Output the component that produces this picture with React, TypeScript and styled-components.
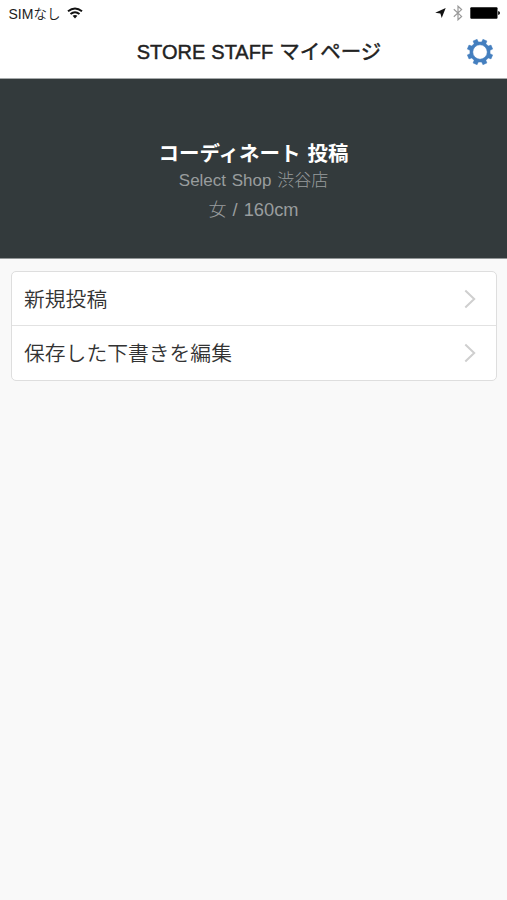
import React from 'react';
import styled, { createGlobalStyle } from 'styled-components';

const GlobalStyle = createGlobalStyle`
  * { box-sizing: border-box; }
  body {
    margin: 0;
    background: #f9f9f9;
    font-family: "Liberation Sans", "Noto Sans CJK JP", sans-serif;
    color: #333;
  }
`;

const Screen = styled.div`
  min-height: 900px;
  display: flex;
  flex-direction: column;
  background: #f9f9f9;
`;

const StatusBar = styled.div`
  height: 26px;
  padding: 0 6px 0 8.5px;
  display: flex;
  align-items: center;
  justify-content: space-between;
  background: #fff;
`;

const StatusGroup = styled.div<{ $gap: number }>`
  display: flex;
  align-items: center;
  gap: ${(p) => p.$gap}px;
  color: #1c1c1c;
  font-size: 14px;
  line-height: 20px;
  white-space: nowrap;
`;

const Carrier = styled.span`
  padding-top: 1px;
`;

const Kana = styled.span<{ $size: number; $weight?: number }>`
  font-family: "Noto Sans CJK JP", sans-serif;
  font-size: ${(p) => p.$size}px;
  font-weight: ${(p) => p.$weight ?? 400};
`;

const NavBar = styled.header`
  height: 53px;
  display: grid;
  grid-template-columns: 44px 1fr 44px;
  align-items: center;
  padding: 0 5px 1px;
  background: #fff;
  border-bottom: 1px solid #a5a9aa;
`;

const Title = styled.h1`
  grid-column: 2;
  margin: 0;
  padding: 0 0 1px 11px;
  text-align: center;
  font-size: 20px;
  line-height: 28px;
  font-weight: 400;
  word-spacing: 0.5px;
  color: #222;
  white-space: nowrap;
  -webkit-text-stroke: 0.45px #222;
`;

const SettingsButton = styled.button`
  height: 44px;
  padding: 0;
  border: 0;
  background: none;
  display: flex;
  align-items: center;
  justify-content: center;
`;

const Profile = styled.section`
  height: 180px;
  padding-top: 58px;
  display: flex;
  flex-direction: column;
  align-items: center;
  background: #333a3c;
  border-bottom: 1px solid #929697;
  white-space: nowrap;
`;

const Name = styled.h2`
  margin: 0;
  font-family: "Noto Sans CJK JP", sans-serif;
  font-size: 20.5px;
  line-height: 30px;
  font-weight: 700;
  word-spacing: 2.5px;
  color: #fff;
`;

const Detail = styled.p<{ $height: number; $size: number }>`
  margin: 0;
  font-size: ${(p) => p.$size}px;
  line-height: ${(p) => p.$height}px;
  height: ${(p) => p.$height}px;
  word-spacing: 1px;
  color: #999d9e;
`;

const Menu = styled.nav`
  margin: 12px 10px 0 11px;
  border: 1px solid #dedede;
  border-radius: 5px;
  background: #fff;
`;

const MenuItem = styled.a`
  height: 53px;
  padding: 0 20px 0 12px;
  display: flex;
  align-items: center;
  justify-content: space-between;
  font-family: "Noto Sans CJK JP", sans-serif;
  font-size: 20.8px;
  line-height: 30px;
  font-weight: 350;
  color: #333;

  & + & {
    height: 55px;
    padding-bottom: 1px;
    border-top: 1px solid #e2e2e2;
  }
`;

const MenuLabel = styled.span`
  padding-bottom: 2px;
`;

const gearPoints = Array.from({ length: 8 }, (_, i) => {
  const center = 22.5 + i * 45;
  return [
    [-13, 10.2],
    [-9.5, 13],
    [9.5, 13],
    [13, 10.2],
  ]
    .map(([offset, radius]) => {
      const a = ((center + offset) * Math.PI) / 180;
      return `${(14 + radius * Math.cos(a)).toFixed(2)} ${(14 + radius * Math.sin(a)).toFixed(2)}`;
    })
    .join('L');
}).join('L');

const GearIcon = () => (
  <svg width="28" height="28" viewBox="0 0 28 28">
    <path
      fill="#447fbf"
      stroke="#447fbf"
      strokeWidth=".5"
      strokeLinejoin="round"
      fillRule="evenodd"
      d={`M${gearPoints}ZM14 6.8a7.2 7.2 0 1 0 0 14.4a7.2 7.2 0 1 0 0-14.4Z`}
    />
  </svg>
);

const WifiIcon = () => (
  <svg width="16" height="12" viewBox="0 0 16 12" fill="none" stroke="#111" strokeWidth="2">
    <path d="M1 4.3Q8-1.3 15 4.3M3.5 7.1Q8 3.4 12.5 7.1" />
    <path d="M5.6 8.8Q8 7 10.4 8.8L8 11.4Z" fill="#111" stroke="none" />
  </svg>
);

const LocationIcon = () => (
  <svg width="11" height="10" viewBox="0 0 11 10">
    <path d="M10.7 0L6.7 10L5.4 5.5L.2 4.8Z" fill="#111" />
  </svg>
);

const BluetoothIcon = () => (
  <svg width="10" height="16" viewBox="0 0 10 16" fill="none" stroke="#999" strokeWidth="1.2">
    <path d="M.8 4.2L8.6 11.4L5 14.8V1.2L8.6 4.6L.8 11.8" />
  </svg>
);

const BatteryIcon = () => (
  <svg width="31" height="12" viewBox="0 0 31 12">
    <rect x=".3" y=".3" width="27.2" height="11.4" rx="1" fill="#000" />
    <path d="M28.2 4Q30 4.5 30 6T28.2 8Z" fill="#000" />
  </svg>
);

const Chevron = () => (
  <svg width="12" height="20" viewBox="0 0 12 20" fill="none" stroke="#cfcfcf" strokeWidth="2">
    <path d="M1.3 1.5L10.2 10L1.3 18.5" />
  </svg>
);

const items = ['新規投稿', '保存した下書きを編集'];

export default function App() {
  return (
    <Screen>
      <GlobalStyle />
      <StatusBar>
        <StatusGroup $gap={7}>
          <Carrier>
            SIM<Kana $size={13.5} $weight={350}>なし</Kana>
          </Carrier>
          <WifiIcon />
        </StatusGroup>
        <StatusGroup $gap={7}>
          <LocationIcon />
          <BluetoothIcon />
          <BatteryIcon />
        </StatusGroup>
      </StatusBar>
      <NavBar>
        <Title>
          STORE STAFF <Kana $size={20.5}>マイページ</Kana>
        </Title>
        <SettingsButton aria-label="設定">
          <GearIcon />
        </SettingsButton>
      </NavBar>
      <Profile>
        <Name>コーディネート 投稿</Name>
        <Detail $height={24} $size={17}>
          Select Shop <Kana $size={17} $weight={300}>渋谷店</Kana>
        </Detail>
        <Detail $height={34} $size={18.3}>
          <Kana $size={18} $weight={300}>女</Kana> / 160cm
        </Detail>
      </Profile>
      <Menu>
        {items.map((label) => (
          <MenuItem key={label}>
            <MenuLabel>{label}</MenuLabel>
            <Chevron />
          </MenuItem>
        ))}
      </Menu>
    </Screen>
  );
}
